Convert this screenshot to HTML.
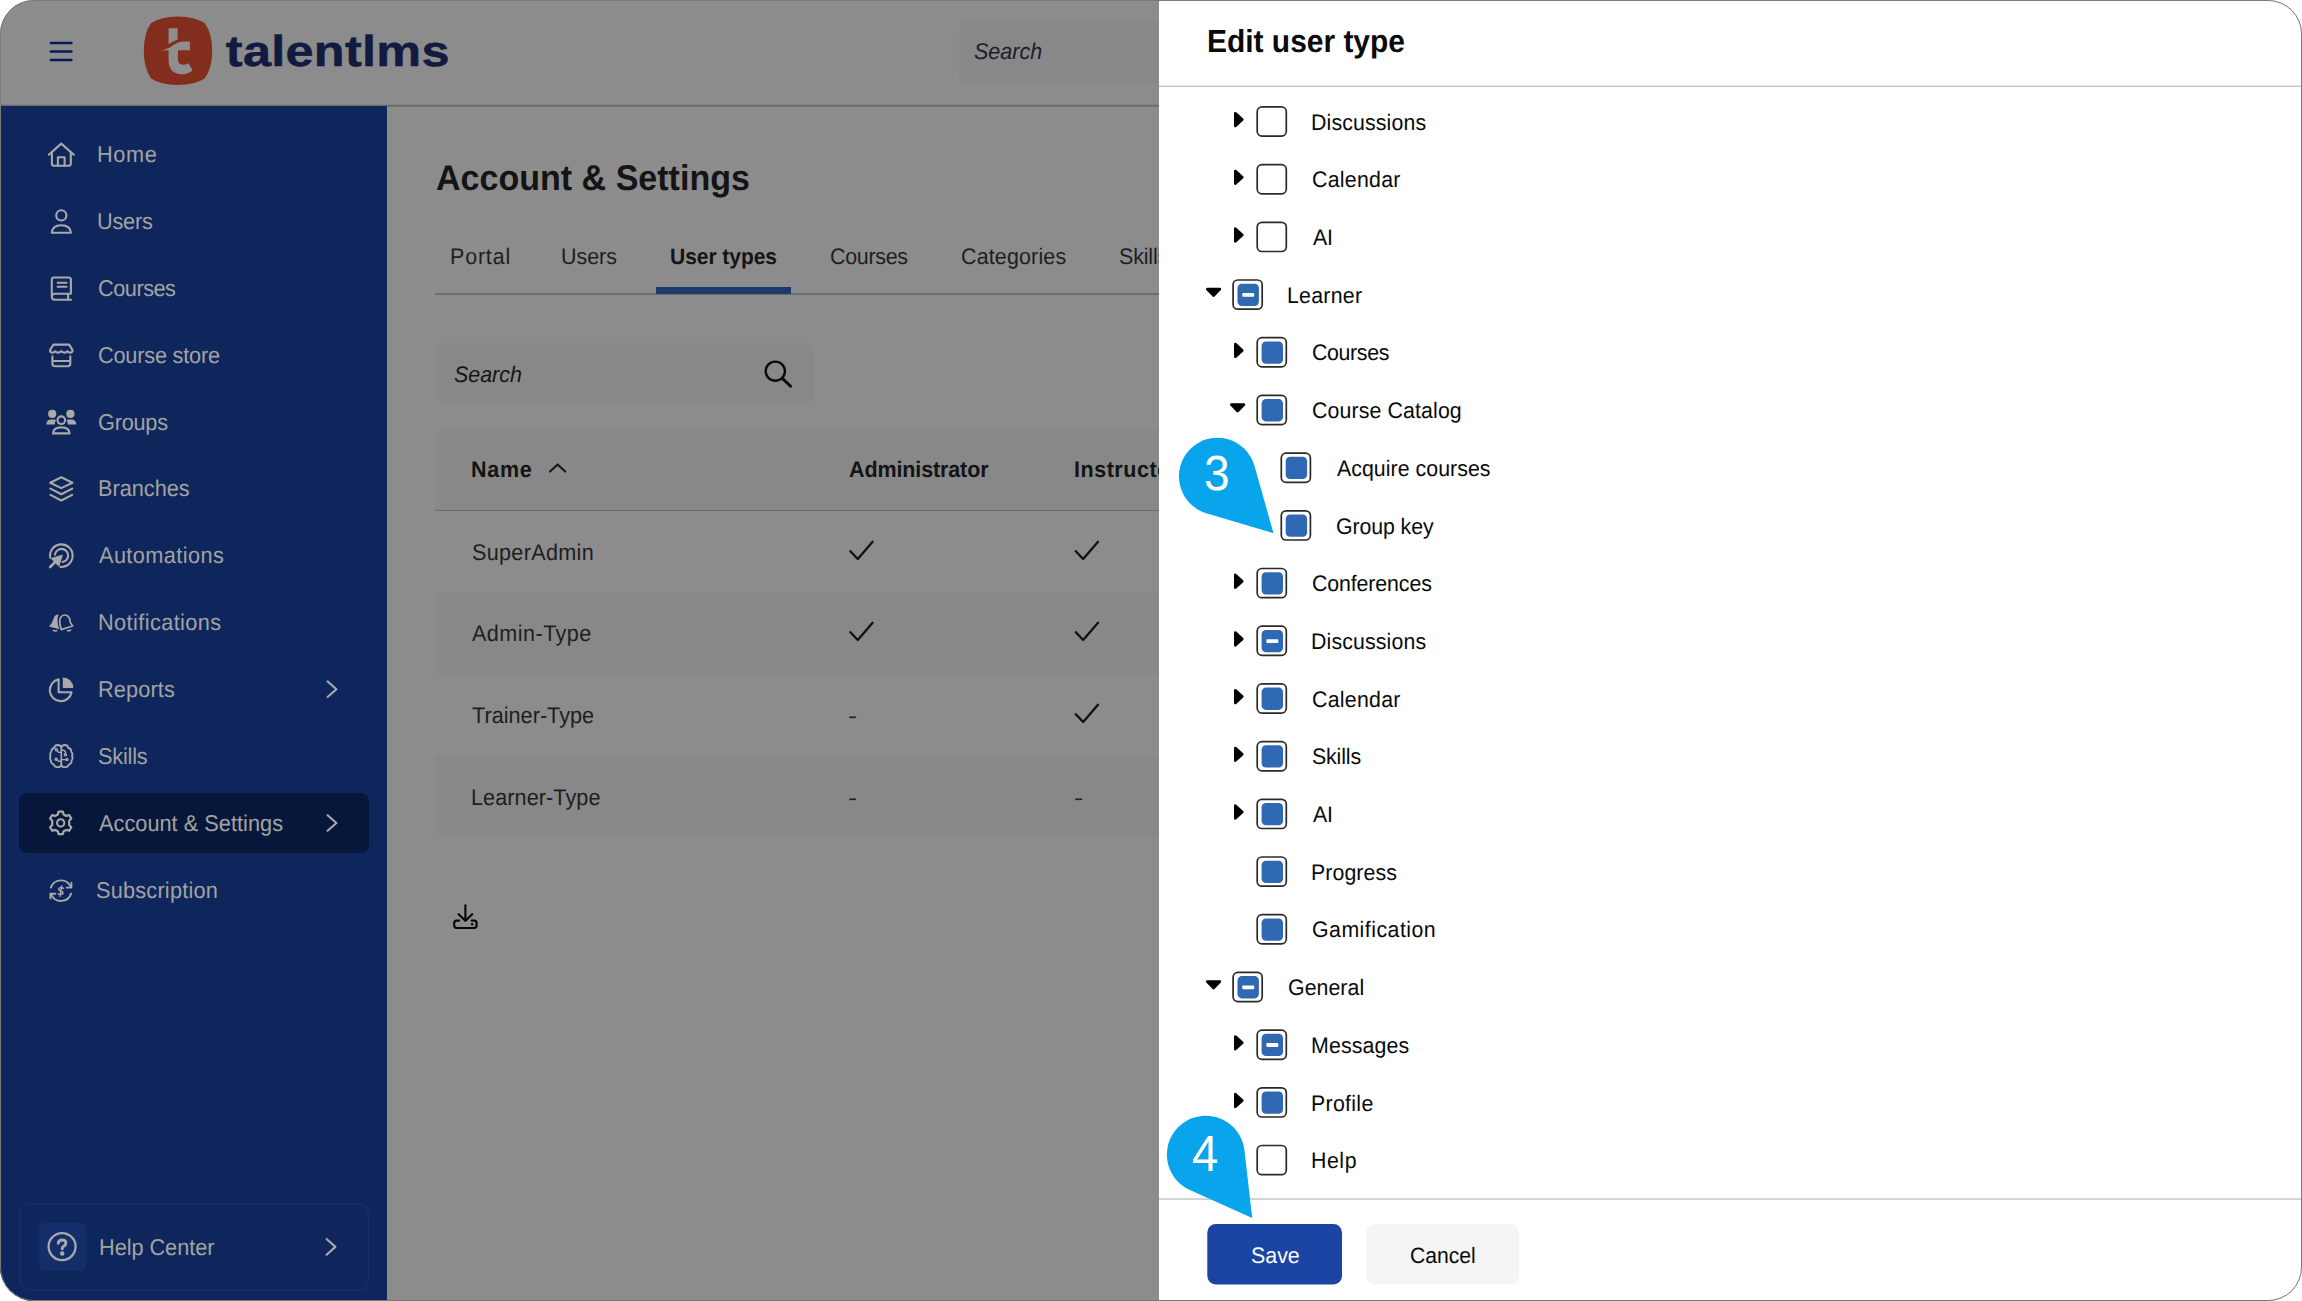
<!DOCTYPE html>
<html lang="en">
<head>
<meta charset="utf-8">
<title>Edit user type - TalentLMS</title>
<style>
*{box-sizing:border-box}
html,body{margin:0;padding:0;background:#fff}
body{width:2302px;height:1301px;overflow:hidden;position:relative;font-family:"Liberation Sans",sans-serif}
#frame{position:absolute;left:0;top:0;width:2302px;height:1301px;border-radius:34px;overflow:hidden;background:#8c8c8c}
#frameborder{position:absolute;left:0;top:0;width:2302px;height:1301px;border-radius:34px;border:1.5px solid #7a7a7a;pointer-events:none;z-index:50}
.t{position:absolute;display:block;margin:0;padding:0;border:0;background:none;white-space:nowrap;line-height:1;font-weight:400;font-style:normal;text-decoration:none;transform-origin:0 0;text-rendering:geometricPrecision;font-family:"Liberation Sans",sans-serif}
header,nav,main,aside,section,ul,li{display:contents}
.abs{position:absolute}
svg{position:absolute;overflow:visible}
#sidebar{position:absolute;left:0;top:106px;width:387px;height:1195px;background:#0e265b}
#topbar{position:absolute;left:0;top:0;width:1159px;height:106px}
#panel{position:absolute;left:1159px;top:0;width:1143px;height:1301px;background:#fff}
</style>
</head>
<body>
<div id="frame">

<header>
<div id="topbar"></div>
<span class="t" style="left:225.80px;top:29.88px;font-size:50.41px;color:#111a3f;font-weight:700;letter-spacing:0.3px;transform:scale(1,0.86);-webkit-text-stroke:0.6px #111a3f;">talentlms</span>
<div class="abs" style="left:958.5px;top:20px;width:260px;height:63px;border-radius:9px;background:#888888"></div>
<span class="t" style="left:974.30px;top:41.00px;font-size:22.64px;color:#1c1c2c;font-style:italic;transform:scaleX(0.952);">Search</span>
</header>
<nav>
<div id="sidebar"></div>
<div class="abs" style="left:19px;top:793px;width:350px;height:60px;border-radius:8px;background:#07173b"></div>
<a class="t" style="left:97.22px;top:143.00px;font-size:22.80px;color:#a2a2a2;letter-spacing:0.65px;transform:scaleX(0.952);">Home</a>
<a class="t" style="left:97.33px;top:210.00px;font-size:22.80px;color:#a2a2a2;letter-spacing:-0.22px;transform:scaleX(0.952);">Users</a>
<a class="t" style="left:97.91px;top:277.00px;font-size:22.80px;color:#a2a2a2;letter-spacing:-0.5px;transform:scaleX(0.952);">Courses</a>
<a class="t" style="left:97.91px;top:344.00px;font-size:22.80px;color:#a2a2a2;letter-spacing:-0.21px;transform:scaleX(0.952);">Course store</a>
<a class="t" style="left:97.91px;top:411.00px;font-size:22.80px;color:#a2a2a2;letter-spacing:-0.23px;transform:scaleX(0.952);">Groups</a>
<a class="t" style="left:97.82px;top:477.00px;font-size:22.80px;color:#a2a2a2;letter-spacing:-0.01px;transform:scaleX(0.952);">Branches</a>
<a class="t" style="left:98.96px;top:544.00px;font-size:22.80px;color:#a2a2a2;letter-spacing:0.43px;transform:scaleX(0.952);">Automations</a>
<a class="t" style="left:97.62px;top:611.00px;font-size:22.80px;color:#a2a2a2;letter-spacing:0.43px;transform:scaleX(0.952);">Notifications</a>
<a class="t" style="left:97.82px;top:678.00px;font-size:22.80px;color:#a2a2a2;letter-spacing:0.13px;transform:scaleX(0.952);">Reports</a>
<a class="t" style="left:98.02px;top:745.00px;font-size:22.80px;color:#a2a2a2;letter-spacing:-0.21px;transform:scaleX(0.952);">Skills</a>
<a class="t" style="left:98.96px;top:812.00px;font-size:22.80px;color:#a2a2a2;letter-spacing:0.04px;transform:scaleX(0.952);">Account &amp; Settings</a>
<a class="t" style="left:96.42px;top:879.00px;font-size:22.80px;color:#a2a2a2;letter-spacing:0.23px;transform:scaleX(0.952);">Subscription</a>
<a class="t" style="left:98.62px;top:1236.00px;font-size:22.80px;color:#a2a2a2;letter-spacing:-0.04px;transform:scaleX(0.952);">Help Center</a>
</nav>
<main>
<h1 class="t" style="left:435.78px;top:161.00px;font-size:35.76px;color:#141414;font-weight:700;transform:scaleX(0.952);">Account &amp; Settings</h1>
<a class="t" style="left:449.84px;top:246.00px;font-size:22.50px;color:#1e1e1e;letter-spacing:0.89px;transform:scaleX(0.952);">Portal</a>
<a class="t" style="left:561.15px;top:246.00px;font-size:22.50px;color:#1e1e1e;transform:scaleX(0.952);">Users</a>
<a class="t" style="left:669.94px;top:246.00px;font-size:22.10px;color:#141414;font-weight:700;letter-spacing:-0.06px;transform:scaleX(0.952);">User types</a>
<a class="t" style="left:829.93px;top:246.00px;font-size:22.50px;color:#1e1e1e;letter-spacing:-0.3px;transform:scaleX(0.952);">Courses</a>
<a class="t" style="left:960.93px;top:246.00px;font-size:22.50px;color:#1e1e1e;letter-spacing:0.18px;transform:scaleX(0.952);">Categories</a>
<a class="t" style="left:1118.84px;top:246.00px;font-size:22.50px;color:#1e1e1e;letter-spacing:-0.14px;transform:scaleX(0.952);">Skills</a>
<div class="abs" style="left:435px;top:293.4px;width:760px;height:1.7px;background:#6c6d6e"></div>
<div class="abs" style="left:656px;top:287.3px;width:135px;height:6.4px;background:#1a3a6c"></div>
<div class="abs" style="left:435.4px;top:343.4px;width:378.4px;height:60.6px;border-radius:9px;background:#888888"></div>
<span class="t" style="left:454.40px;top:364.00px;font-size:22.50px;color:#151515;font-style:italic;transform:scaleX(0.952);">Search</span>
<div class="abs" style="left:435.4px;top:429px;width:760px;height:408.3px;border-radius:9px;overflow:hidden"><div class="abs" style="left:0;top:0;width:760px;height:81px;background:#888888"></div><div class="abs" style="left:0;top:80.5px;width:760px;height:1.6px;background:#6a6b6c"></div><div class="abs" style="left:0;top:163.2px;width:760px;height:81.7px;background:#888888"></div><div class="abs" style="left:0;top:327.2px;width:760px;height:81.2px;background:#888888"></div></div>
<span class="t" style="left:471.18px;top:459.00px;font-size:22.60px;color:#141414;font-weight:700;letter-spacing:0.76px;transform:scaleX(0.952);">Name</span>
<span class="t" style="left:848.98px;top:459.00px;font-size:22.60px;color:#141414;font-weight:700;letter-spacing:-0.13px;transform:scaleX(0.952);">Administrator</span>
<span class="t" style="left:1074.18px;top:459.00px;font-size:22.60px;color:#141414;font-weight:700;letter-spacing:0.55px;transform:scaleX(0.952);">Instructor</span>
<span class="t" style="left:471.53px;top:541.00px;font-size:22.70px;color:#1e1e1e;letter-spacing:0.33px;transform:scaleX(0.952);">SuperAdmin</span>
<span class="t" style="left:471.56px;top:622.00px;font-size:22.70px;color:#1e1e1e;letter-spacing:0.48px;transform:scaleX(0.952);">Admin-Type</span>
<span class="t" style="left:472.02px;top:704.00px;font-size:22.70px;color:#1e1e1e;letter-spacing:0.04px;transform:scaleX(0.952);">Trainer-Type</span>
<span class="t" style="left:848.18px;top:706.00px;font-size:21.50px;color:#222;transform:scaleX(1.291);">-</span>
<span class="t" style="left:471.43px;top:786.00px;font-size:22.70px;color:#1e1e1e;letter-spacing:0.09px;transform:scaleX(0.952);">Learner-Type</span>
<span class="t" style="left:848.18px;top:788.00px;font-size:21.50px;color:#222;transform:scaleX(1.291);">-</span>
<span class="t" style="left:1073.58px;top:788.00px;font-size:21.50px;color:#222;transform:scaleX(1.291);">-</span>
</main>
<svg style="left:0;top:0" width="1159" height="1301" viewBox="0 0 1159 1301">
<rect x="0" y="104.8" width="387" height="1.2" fill="#696969"/><rect x="387" y="104.8" width="772" height="1.8" fill="#696969"/>
<g transform="translate(48.00 38.00)"><g stroke="#041a5a" stroke-width="2.5" stroke-linecap="round"><line x1="2.9" y1="4.9" x2="23.4" y2="4.9"/><line x1="2.9" y1="13.5" x2="23.4" y2="13.5"/><line x1="2.9" y1="22.1" x2="23.4" y2="22.1"/></g></g>
<g transform="translate(0.00 0.00)"><g>
<path d="M151.6 23.7 C164.5 15.2 191.3 15.2 204.2 23.7 C213.8 36.8 213.8 64.8 204.2 77.9 C191.3 86.4 164.5 86.4 151.6 77.9 C142.3 64.8 142.3 36.8 151.6 23.7Z" fill="#832e1c" stroke="#832e1c" stroke-width="1.6" stroke-linejoin="round"/>
<path d="M168.6 28.2 H177.6 V39.6 Q172.6 41.6 168.6 44.2 Z" fill="#8e8e8e"/>
<path d="M160.8 50.3 Q168.5 49.2 174.2 44.6 Q178.4 41.4 183.5 41.4 H189.9 V50.3 Z" fill="#8e8e8e"/>
<path d="M168.6 50 H177.9 V59.5 Q178.3 64.8 183.4 64.8 Q186.3 64.8 188.5 63.3 L192.6 70.3 Q188.4 74.2 182.3 74.2 Q168.6 74.2 168.6 60 Z" fill="#8e8e8e"/>
</g></g>
<rect x="19.7" y="1203.8" width="348.8" height="86.4" rx="10.5" fill="none" stroke="#14316e" stroke-width="1.4"/>
<rect x="38.3" y="1222.8" width="48.3" height="48.3" rx="7" fill="#132e69"/>
<g transform="translate(762.00 358.00)"><circle cx="13.3" cy="13.2" r="9.6" fill="none" stroke="#0a0a0a" stroke-width="2.4"/><line x1="20.4" y1="20.4" x2="28.6" y2="28.2" stroke="#0a0a0a" stroke-width="2.9" stroke-linecap="round"/></g>
<g transform="translate(547.00 460.00)"><path d="M3 11.6 L10.6 4.4 L18.2 11.6" fill="none" stroke="#141414" stroke-width="2" stroke-linecap="round" stroke-linejoin="round"/></g>
<g transform="translate(847.20 537.60)"><path d="M3.2 13.6 L10.6 21.4 L25.4 4.2" fill="none" stroke="#111" stroke-width="2.3" stroke-linecap="round" stroke-linejoin="round"/></g>
<g transform="translate(1072.60 537.60)"><path d="M3.2 13.6 L10.6 21.4 L25.4 4.2" fill="none" stroke="#111" stroke-width="2.3" stroke-linecap="round" stroke-linejoin="round"/></g>
<g transform="translate(847.20 618.60)"><path d="M3.2 13.6 L10.6 21.4 L25.4 4.2" fill="none" stroke="#111" stroke-width="2.3" stroke-linecap="round" stroke-linejoin="round"/></g>
<g transform="translate(1072.60 618.60)"><path d="M3.2 13.6 L10.6 21.4 L25.4 4.2" fill="none" stroke="#111" stroke-width="2.3" stroke-linecap="round" stroke-linejoin="round"/></g>
<g transform="translate(1072.60 700.60)"><path d="M3.2 13.6 L10.6 21.4 L25.4 4.2" fill="none" stroke="#111" stroke-width="2.3" stroke-linecap="round" stroke-linejoin="round"/></g>
<g transform="translate(451.00 902.00)"><g fill="none" stroke="#050505" stroke-width="2.1" stroke-linecap="round" stroke-linejoin="round"><path d="M14.4 3.2 V18.4"/><path d="M7.6 12.2 L14.4 18.8 L21.2 12.2"/><path d="M8.2 18.6 H5.6 Q3.2 18.6 3.2 21 V23.6 Q3.2 26 5.6 26 H23.2 Q25.6 26 25.6 23.6 V21 Q25.6 18.6 23.2 18.6 H20.6"/></g><circle cx="21.2" cy="22.3" r="1.3" fill="#050505"/></g>

<g fill="none" stroke="#a9a9a9" stroke-width="2.1" stroke-linecap="round" stroke-linejoin="round">
<!-- home -->
<path d="M48.8 154.7 L61.3 143.6 L73.8 154.7"/>
<path d="M51.9 152.6 V163.4 Q51.9 165.8 54.3 165.8 H68.4 Q70.8 165.8 70.8 163.4 V152.6"/>
<path d="M57.9 165.6 V157.2 H64.6 V165.6"/>
<!-- users -->
<circle cx="61.3" cy="215.4" r="5.1"/>
<path d="M51.8 232.8 Q52.2 225.2 61.3 225.2 Q70.4 225.2 70.9 232.8 Z"/>
<!-- courses -->
<path d="M70.9 293.8 V279.8 Q70.9 277.5 68.6 277.5 H54.1 Q51.8 277.5 51.8 279.8 V296.8 Q51.8 299.8 54.8 299.8 H71 M51.8 296.8 Q51.8 293.8 54.8 293.8 H70.9 M68.1 293.8 V299.8"/>
<path d="M57.6 282.7 H66.6 M57.6 286.8 H66.6" stroke-width="1.9"/>
<!-- course store -->
<path d="M53.4 344.6 H69.2 L72.6 350.3 Q72.6 352.6 70.2 352.6 Q68.4 352.6 67.6 351.2 Q66.4 352.6 64.5 352.6 Q62.4 352.6 61.3 351.2 Q60.2 352.6 58.1 352.6 Q56.2 352.6 55 351.2 Q54.2 352.6 52.4 352.6 Q50 352.6 50 350.3 Z"/>
<path d="M52.4 356.4 V363.8 Q52.4 366.2 54.8 366.2 H67.9 Q70.3 366.2 70.3 363.8 V356.4 M52.4 361 H70.3"/>
<!-- groups -->
<circle cx="61.3" cy="420.2" r="3.8"/>
<path d="M53 433.4 Q53.4 427.4 61.3 427.4 Q69.2 427.4 69.6 433.4 Z"/>
<!-- branches -->
<path d="M61.3 477.3 L72.4 482.7 L61.3 488.1 L50.2 482.7 Z"/>
<path d="M50.4 488.6 L61.3 494.2 L72.2 488.6"/>
<path d="M50.4 494.9 L61.3 500.5 L72.2 494.9"/>
<!-- automations -->
<path d="M50.2 557.6 A11.3 11.3 0 1 1 60.4 566.9"/>
<path d="M55 554.6 A6.6 6.6 0 1 1 62.6 562"/>
<path d="M50.2 567 L56 561.2" stroke-width="2.6"/>
<!-- reports -->
<path d="M58.6 679.4 A11 11 0 1 0 71.6 692.2 H58.6 Z" />
<!-- settings gear -->
<circle cx="60.7" cy="822.9" r="3.6"/>
<path d="M58.6 811.7 H62.8 L63.7 814.6 L66.3 815.9 L69.2 815 L71.3 818.6 L69.2 820.8 V825 L71.3 827.2 L69.2 830.8 L66.3 829.9 L63.7 831.2 L62.8 834.1 H58.6 L57.7 831.2 L55.1 829.9 L52.2 830.8 L50.1 827.2 L52.2 825 V820.8 L50.1 818.6 L52.2 815 L55.1 815.9 L57.7 814.6 Z" stroke-width="2.2"/>
<!-- subscription -->
<path d="M50.9 887.6 A10.6 10.6 0 0 1 70.6 886.6" stroke-width="1.9"/>
<path d="M71.1 893.6 A10.6 10.6 0 0 1 51.4 894.8" stroke-width="1.9"/>
<path d="M66.6 887.6 H71.4 V882.8" stroke-width="1.9"/>
<path d="M55.2 893.8 H50.4 V898.6" stroke-width="1.9"/>
<path d="M63.6 888.4 Q61 886.9 59.2 888.2 Q57.6 890 60.8 890.9 Q64 892 62.6 893.9 Q60.8 895.2 58.2 893.8 M61.8 886 L60 896.2" stroke-width="1.5"/>
<!-- skills brain -->
<path d="M61.3 746.2 V766.4" stroke-width="1.7"/>
<path d="M61.3 747.4 Q60.4 744.8 57.6 745 Q54.6 745.2 54.2 748 Q51.2 748.6 51.4 751.6 Q49.4 753.4 50.6 756 Q49.2 758.4 51 760.6 Q50.8 763.8 53.8 764.6 Q54.6 767.4 57.6 767.2 Q60.4 767.4 61.3 765" stroke-width="1.8"/>
<path d="M61.3 747.4 Q62.2 744.8 65 745 Q68 745.2 68.4 748 Q71.4 748.6 71.2 751.6 Q73.2 753.4 72 756 Q73.4 758.4 71.6 760.6 Q71.8 763.8 68.8 764.6 Q68 767.4 65 767.2 Q62.2 767.4 61.3 765" stroke-width="1.8"/>
<path d="M61.3 752.4 H58.8 L57.2 750.8 M61.3 761.2 H58.6 L57 759.8 M61.3 750.2 H64 L65.4 751.8 V753.6 M61.3 759.6 H65.6" stroke-width="1.4"/>
<circle cx="56.4" cy="749.8" r="1.1" stroke-width="1.3"/><circle cx="56.2" cy="759.2" r="1.1" stroke-width="1.3"/><circle cx="65.4" cy="754.8" r="1.1" stroke-width="1.3"/><circle cx="66.9" cy="759.6" r="1.1" stroke-width="1.3"/>
<!-- notifications outline bell -->
<path d="M61.2 629.6 Q58.6 620.6 60.6 617.4 Q63.2 613.8 67 615.6 Q69.8 617.2 70.4 622.6 L72.6 626 Z" stroke-width="1.7"/>
<path d="M67.6 630.6 Q69.2 631.4 70.6 630" stroke-width="1.6"/>
<path d="M53.4 630.4 Q55 631.6 56.6 630.6" stroke-width="1.6"/>
<!-- help -->
<circle cx="62.1" cy="1246.6" r="13.5" stroke-width="2.3"/>
<path d="M58.3 1243.2 Q58.5 1239.9 62.2 1239.9 Q65.9 1239.9 65.9 1243 Q65.9 1245 63.9 1246 Q62.2 1247 62.2 1248.8" stroke-width="3"/>
<!-- chevrons -->
<path d="M327.6 681.4 L336.4 689.2 L327.6 697"/>
<path d="M327.6 815.2 L336.4 823 L327.6 830.8"/>
<path d="M326.6 1239 L335.4 1246.9 L326.6 1254.8"/>
</g>
<g fill="#a9a9a9" stroke="none">
<!-- groups filled -->
<circle cx="52.2" cy="413.9" r="4.1"/><circle cx="70.4" cy="413.9" r="4.1"/>
<path d="M46.2 424.4 Q46.6 419.6 51.4 419.6 H54.6 Q55.6 419.6 56 420.2 Q54.6 422 54.8 424.4 Z"/>
<path d="M76.4 424.4 Q76 419.6 71.2 419.6 H68 Q67 419.6 66.6 420.2 Q68 422 67.8 424.4 Z"/>
<!-- automations arrow -->
<path d="M62.2 555.2 L51.6 558.6 L58.8 565.8 Z" stroke="#a9a9a9" stroke-width="1.2" stroke-linejoin="round"/>
<!-- reports quarter -->
<path d="M62.8 677.5 A10.6 10.6 0 0 1 73.4 688.1 H62.8 Z"/>
<!-- notifications filled bell -->
<path d="M49 626.4 Q52.6 623 53.6 618.6 Q54.6 614.4 58.6 614.4 Q57.2 617.6 57.6 622 Q58 626.4 59.4 629.2 Z"/>
<circle cx="62.2" cy="1253.5" r="2.2"/>
</g>

</svg>
<aside>
<div id="panel"></div>
<h2 class="t" style="left:1207.02px;top:26.00px;font-size:31.85px;color:#0b0b0b;font-weight:700;transform:scaleX(0.94);">Edit user type</h2>
<svg style="left:0;top:0" width="2302" height="1301" viewBox="0 0 2302 1301">
<rect x="1159" y="85.55" width="1143" height="1.5" fill="#c4c8cb"/>
<rect x="1159" y="1198.3" width="1143" height="1.5" fill="#c4c8cb"/>
<rect x="1207.3" y="1223.9" width="134.7" height="60.6" rx="8.5" fill="#1b45a5"/>
<rect x="1366.3" y="1223.9" width="152.9" height="60.6" rx="8.5" fill="#f5f5f5"/>
<g transform="translate(1255.30 105.00)"><rect x="1.9" y="1.9" width="29.1" height="29.2" rx="4.8" fill="#fff" stroke="#2a2a2a" stroke-width="1.7"/></g>
<g transform="translate(1233.95 111.80)"><path d="M1.4 1.5 L8.3 7.8 L1.4 14.1 Z" fill="#000" stroke="#000" stroke-width="2.7" stroke-linejoin="round"/></g>
<g transform="translate(1255.30 162.70)"><rect x="1.9" y="1.9" width="29.1" height="29.2" rx="4.8" fill="#fff" stroke="#2a2a2a" stroke-width="1.7"/></g>
<g transform="translate(1233.95 169.50)"><path d="M1.4 1.5 L8.3 7.8 L1.4 14.1 Z" fill="#000" stroke="#000" stroke-width="2.7" stroke-linejoin="round"/></g>
<g transform="translate(1255.30 220.40)"><rect x="1.9" y="1.9" width="29.1" height="29.2" rx="4.8" fill="#fff" stroke="#2a2a2a" stroke-width="1.7"/></g>
<g transform="translate(1233.95 227.20)"><path d="M1.4 1.5 L8.3 7.8 L1.4 14.1 Z" fill="#000" stroke="#000" stroke-width="2.7" stroke-linejoin="round"/></g>
<g transform="translate(1231.20 278.10)"><rect x="1.9" y="1.9" width="29.1" height="29.2" rx="4.8" fill="#fff" stroke="#2a2a2a" stroke-width="1.7"/><rect x="6.3" y="5.6" width="21.4" height="22.3" rx="4.4" fill="#2f68b3"/><rect x="11.1" y="14.9" width="11.9" height="3.8" rx="0.8" fill="#fff"/></g>
<g transform="translate(1205.75 287.75)"><path d="M1.5 1.4 L14.1 1.4 L7.8 7.8 Z" fill="#000" stroke="#000" stroke-width="2.7" stroke-linejoin="round"/></g>
<g transform="translate(1255.30 335.80)"><rect x="1.9" y="1.9" width="29.1" height="29.2" rx="4.8" fill="#fff" stroke="#2a2a2a" stroke-width="1.7"/><rect x="6.3" y="5.6" width="21.4" height="22.3" rx="4.4" fill="#2f68b3"/></g>
<g transform="translate(1233.95 342.60)"><path d="M1.4 1.5 L8.3 7.8 L1.4 14.1 Z" fill="#000" stroke="#000" stroke-width="2.7" stroke-linejoin="round"/></g>
<g transform="translate(1255.30 393.50)"><rect x="1.9" y="1.9" width="29.1" height="29.2" rx="4.8" fill="#fff" stroke="#2a2a2a" stroke-width="1.7"/><rect x="6.3" y="5.6" width="21.4" height="22.3" rx="4.4" fill="#2f68b3"/></g>
<g transform="translate(1229.85 403.15)"><path d="M1.5 1.4 L14.1 1.4 L7.8 7.8 Z" fill="#000" stroke="#000" stroke-width="2.7" stroke-linejoin="round"/></g>
<g transform="translate(1279.40 451.20)"><rect x="1.9" y="1.9" width="29.1" height="29.2" rx="4.8" fill="#fff" stroke="#2a2a2a" stroke-width="1.7"/><rect x="6.3" y="5.6" width="21.4" height="22.3" rx="4.4" fill="#2f68b3"/></g>
<g transform="translate(1279.40 508.90)"><rect x="1.9" y="1.9" width="29.1" height="29.2" rx="4.8" fill="#fff" stroke="#2a2a2a" stroke-width="1.7"/><rect x="6.3" y="5.6" width="21.4" height="22.3" rx="4.4" fill="#2f68b3"/></g>
<g transform="translate(1255.30 566.60)"><rect x="1.9" y="1.9" width="29.1" height="29.2" rx="4.8" fill="#fff" stroke="#2a2a2a" stroke-width="1.7"/><rect x="6.3" y="5.6" width="21.4" height="22.3" rx="4.4" fill="#2f68b3"/></g>
<g transform="translate(1233.95 573.40)"><path d="M1.4 1.5 L8.3 7.8 L1.4 14.1 Z" fill="#000" stroke="#000" stroke-width="2.7" stroke-linejoin="round"/></g>
<g transform="translate(1255.30 624.30)"><rect x="1.9" y="1.9" width="29.1" height="29.2" rx="4.8" fill="#fff" stroke="#2a2a2a" stroke-width="1.7"/><rect x="6.3" y="5.6" width="21.4" height="22.3" rx="4.4" fill="#2f68b3"/><rect x="11.1" y="14.9" width="11.9" height="3.8" rx="0.8" fill="#fff"/></g>
<g transform="translate(1233.95 631.10)"><path d="M1.4 1.5 L8.3 7.8 L1.4 14.1 Z" fill="#000" stroke="#000" stroke-width="2.7" stroke-linejoin="round"/></g>
<g transform="translate(1255.30 682.00)"><rect x="1.9" y="1.9" width="29.1" height="29.2" rx="4.8" fill="#fff" stroke="#2a2a2a" stroke-width="1.7"/><rect x="6.3" y="5.6" width="21.4" height="22.3" rx="4.4" fill="#2f68b3"/></g>
<g transform="translate(1233.95 688.80)"><path d="M1.4 1.5 L8.3 7.8 L1.4 14.1 Z" fill="#000" stroke="#000" stroke-width="2.7" stroke-linejoin="round"/></g>
<g transform="translate(1255.30 739.70)"><rect x="1.9" y="1.9" width="29.1" height="29.2" rx="4.8" fill="#fff" stroke="#2a2a2a" stroke-width="1.7"/><rect x="6.3" y="5.6" width="21.4" height="22.3" rx="4.4" fill="#2f68b3"/></g>
<g transform="translate(1233.95 746.50)"><path d="M1.4 1.5 L8.3 7.8 L1.4 14.1 Z" fill="#000" stroke="#000" stroke-width="2.7" stroke-linejoin="round"/></g>
<g transform="translate(1255.30 797.40)"><rect x="1.9" y="1.9" width="29.1" height="29.2" rx="4.8" fill="#fff" stroke="#2a2a2a" stroke-width="1.7"/><rect x="6.3" y="5.6" width="21.4" height="22.3" rx="4.4" fill="#2f68b3"/></g>
<g transform="translate(1233.95 804.20)"><path d="M1.4 1.5 L8.3 7.8 L1.4 14.1 Z" fill="#000" stroke="#000" stroke-width="2.7" stroke-linejoin="round"/></g>
<g transform="translate(1255.30 855.10)"><rect x="1.9" y="1.9" width="29.1" height="29.2" rx="4.8" fill="#fff" stroke="#2a2a2a" stroke-width="1.7"/><rect x="6.3" y="5.6" width="21.4" height="22.3" rx="4.4" fill="#2f68b3"/></g>
<g transform="translate(1255.30 912.80)"><rect x="1.9" y="1.9" width="29.1" height="29.2" rx="4.8" fill="#fff" stroke="#2a2a2a" stroke-width="1.7"/><rect x="6.3" y="5.6" width="21.4" height="22.3" rx="4.4" fill="#2f68b3"/></g>
<g transform="translate(1231.20 970.50)"><rect x="1.9" y="1.9" width="29.1" height="29.2" rx="4.8" fill="#fff" stroke="#2a2a2a" stroke-width="1.7"/><rect x="6.3" y="5.6" width="21.4" height="22.3" rx="4.4" fill="#2f68b3"/><rect x="11.1" y="14.9" width="11.9" height="3.8" rx="0.8" fill="#fff"/></g>
<g transform="translate(1205.75 980.15)"><path d="M1.5 1.4 L14.1 1.4 L7.8 7.8 Z" fill="#000" stroke="#000" stroke-width="2.7" stroke-linejoin="round"/></g>
<g transform="translate(1255.30 1028.20)"><rect x="1.9" y="1.9" width="29.1" height="29.2" rx="4.8" fill="#fff" stroke="#2a2a2a" stroke-width="1.7"/><rect x="6.3" y="5.6" width="21.4" height="22.3" rx="4.4" fill="#2f68b3"/><rect x="11.1" y="14.9" width="11.9" height="3.8" rx="0.8" fill="#fff"/></g>
<g transform="translate(1233.95 1035.00)"><path d="M1.4 1.5 L8.3 7.8 L1.4 14.1 Z" fill="#000" stroke="#000" stroke-width="2.7" stroke-linejoin="round"/></g>
<g transform="translate(1255.30 1085.90)"><rect x="1.9" y="1.9" width="29.1" height="29.2" rx="4.8" fill="#fff" stroke="#2a2a2a" stroke-width="1.7"/><rect x="6.3" y="5.6" width="21.4" height="22.3" rx="4.4" fill="#2f68b3"/></g>
<g transform="translate(1233.95 1092.70)"><path d="M1.4 1.5 L8.3 7.8 L1.4 14.1 Z" fill="#000" stroke="#000" stroke-width="2.7" stroke-linejoin="round"/></g>
<g transform="translate(1255.30 1143.60)"><rect x="1.9" y="1.9" width="29.1" height="29.2" rx="4.8" fill="#fff" stroke="#2a2a2a" stroke-width="1.7"/></g>
<path d="M1254.45 465.82 L1273.50 533.20 L1206.40 513.20 A38.5 38.5 0 1 1 1254.45 465.82Z" fill="#08a5ec"/>
<path d="M1244.45 1150.18 L1252.20 1218.00 L1189.90 1190.10 A38.9 38.9 0 1 1 1244.45 1150.18Z" fill="#08a5ec"/>
</svg>
<label class="t" style="left:1311.15px;top:112.00px;font-size:22.40px;color:#0a0a0a;letter-spacing:0.15px;transform:scaleX(0.952);">Discussions</label>
<label class="t" style="left:1312.13px;top:169.00px;font-size:22.40px;color:#0a0a0a;letter-spacing:0.28px;transform:scaleX(0.952);">Calendar</label>
<label class="t" style="left:1312.86px;top:227.00px;font-size:22.40px;color:#0a0a0a;letter-spacing:-0.15px;transform:scaleX(0.952);">AI</label>
<label class="t" style="left:1287.05px;top:285.00px;font-size:22.40px;color:#0a0a0a;letter-spacing:0.28px;transform:scaleX(0.952);">Learner</label>
<label class="t" style="left:1312.13px;top:342.00px;font-size:22.40px;color:#0a0a0a;letter-spacing:-0.35px;transform:scaleX(0.952);">Courses</label>
<label class="t" style="left:1312.13px;top:400.00px;font-size:22.40px;color:#0a0a0a;letter-spacing:0.13px;transform:scaleX(0.952);">Course Catalog</label>
<label class="t" style="left:1336.96px;top:458.00px;font-size:22.40px;color:#0a0a0a;letter-spacing:0.05px;transform:scaleX(0.952);">Acquire courses</label>
<label class="t" style="left:1336.23px;top:516.00px;font-size:22.40px;color:#0a0a0a;letter-spacing:-0.1px;transform:scaleX(0.952);">Group key</label>
<label class="t" style="left:1312.13px;top:573.00px;font-size:22.40px;color:#0a0a0a;letter-spacing:-0.11px;transform:scaleX(0.952);">Conferences</label>
<label class="t" style="left:1311.15px;top:631.00px;font-size:22.40px;color:#0a0a0a;letter-spacing:0.15px;transform:scaleX(0.952);">Discussions</label>
<label class="t" style="left:1312.13px;top:689.00px;font-size:22.40px;color:#0a0a0a;letter-spacing:0.28px;transform:scaleX(0.952);">Calendar</label>
<label class="t" style="left:1311.94px;top:746.00px;font-size:22.40px;color:#0a0a0a;letter-spacing:-0.14px;transform:scaleX(0.952);">Skills</label>
<label class="t" style="left:1312.86px;top:804.00px;font-size:22.40px;color:#0a0a0a;letter-spacing:-0.15px;transform:scaleX(0.952);">AI</label>
<label class="t" style="left:1311.15px;top:862.00px;font-size:22.40px;color:#0a0a0a;letter-spacing:0.09px;transform:scaleX(0.952);">Progress</label>
<label class="t" style="left:1312.13px;top:919.00px;font-size:22.40px;color:#0a0a0a;letter-spacing:0.5px;transform:scaleX(0.952);">Gamification</label>
<label class="t" style="left:1288.03px;top:977.00px;font-size:22.40px;color:#0a0a0a;letter-spacing:0.06px;transform:scaleX(0.952);">General</label>
<label class="t" style="left:1311.15px;top:1035.00px;font-size:22.40px;color:#0a0a0a;letter-spacing:0.15px;transform:scaleX(0.952);">Messages</label>
<label class="t" style="left:1311.15px;top:1093.00px;font-size:22.40px;color:#0a0a0a;letter-spacing:0.32px;transform:scaleX(0.952);">Profile</label>
<label class="t" style="left:1311.15px;top:1150.00px;font-size:22.40px;color:#0a0a0a;letter-spacing:0.58px;transform:scaleX(0.952);">Help</label>
<button class="t" style="left:1250.64px;top:1245.00px;font-size:22.45px;color:#fff;transform:scaleX(0.952);">Save</button>
<button class="t" style="left:1410.34px;top:1245.00px;font-size:22.19px;color:#0a0a0a;transform:scaleX(0.952);">Cancel</button>
<span class="t" style="left:1203.65px;top:449.00px;font-size:49.26px;color:#fff;transform:scaleX(0.936);">3</span>
<span class="t" style="left:1192.25px;top:1128.00px;font-size:50.99px;color:#fff;transform:scaleX(0.936);">4</span>
</aside>
</div>
<div id="frameborder"></div>
</body>
</html>
